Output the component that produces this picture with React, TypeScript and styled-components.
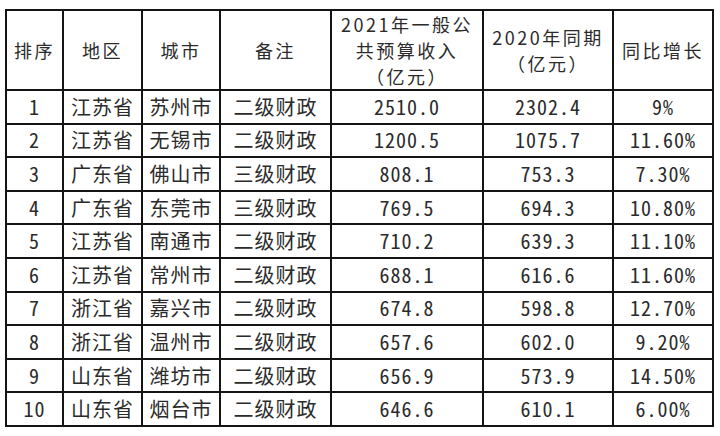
import React from "react";
import styled, { createGlobalStyle } from "styled-components";

const GlobalStyle = createGlobalStyle`
  html, body {
    margin: 0;
    padding: 0;
    background: #ffffff;
  }
`;

const Page = styled.div`
  padding: 9px 0 0 5px;
`;

const Table = styled.table`
  border-collapse: collapse;
  table-layout: fixed;
  width: 709px;
  border: 2px solid #141414;
  color: #2b2b2b;
  font-family: "Noto Sans CJK SC", "Noto Sans", sans-serif;
  font-size: 20px;
`;

const HeadCell = styled.th`
  border: 2px solid #141414;
  height: 77px;
  padding: 0;
  font-size: 18px;
  font-weight: 400;
  letter-spacing: 2.5px;
  line-height: 26px;
  text-align: center;
  vertical-align: middle;
  white-space: nowrap;
`;

const Row = styled.tr`
  height: 33.6px;
`;

const Cell = styled.td<{ $mono?: boolean }>`
  border: 2px solid #141414;
  padding: 0;
  text-align: center;
  vertical-align: middle;
  line-height: 28px;
  font-family: ${(p) =>
    p.$mono
      ? `"Noto Sans Mono CJK SC", "Liberation Mono", monospace`
      : `"Noto Sans CJK SC", "Noto Sans", sans-serif`};
  letter-spacing: 1px;
`;

const widths = [57, 79, 78, 111, 152, 130, 100];

type Item = {
  rank: number;
  region: string;
  city: string;
  note: string;
  income: string;
  last: string;
  growth: string;
};

const rows: Item[] = [
  { rank: 1, region: "江苏省", city: "苏州市", note: "二级财政", income: "2510.0", last: "2302.4", growth: "9%" },
  { rank: 2, region: "江苏省", city: "无锡市", note: "二级财政", income: "1200.5", last: "1075.7", growth: "11.60%" },
  { rank: 3, region: "广东省", city: "佛山市", note: "三级财政", income: "808.1", last: "753.3", growth: "7.30%" },
  { rank: 4, region: "广东省", city: "东莞市", note: "三级财政", income: "769.5", last: "694.3", growth: "10.80%" },
  { rank: 5, region: "江苏省", city: "南通市", note: "二级财政", income: "710.2", last: "639.3", growth: "11.10%" },
  { rank: 6, region: "江苏省", city: "常州市", note: "二级财政", income: "688.1", last: "616.6", growth: "11.60%" },
  { rank: 7, region: "浙江省", city: "嘉兴市", note: "二级财政", income: "674.8", last: "598.8", growth: "12.70%" },
  { rank: 8, region: "浙江省", city: "温州市", note: "二级财政", income: "657.6", last: "602.0", growth: "9.20%" },
  { rank: 9, region: "山东省", city: "潍坊市", note: "二级财政", income: "656.9", last: "573.9", growth: "14.50%" },
  { rank: 10, region: "山东省", city: "烟台市", note: "二级财政", income: "646.6", last: "610.1", growth: "6.00%" },
];

export default function App() {
  return (
    <Page>
      <GlobalStyle />
      <Table>
        <colgroup>
          {widths.map((w, i) => (
            <col key={i} style={{ width: w }} />
          ))}
        </colgroup>
        <thead>
          <tr>
            <HeadCell>排序</HeadCell>
            <HeadCell>地区</HeadCell>
            <HeadCell>城市</HeadCell>
            <HeadCell>备注</HeadCell>
            <HeadCell>
              2021年一般公
              <br />
              共预算收入
              <br />
              （亿元）
            </HeadCell>
            <HeadCell>
              2020年同期
              <br />
              （亿元）
            </HeadCell>
            <HeadCell>同比增长</HeadCell>
          </tr>
        </thead>
        <tbody>
          {rows.map((r) => (
            <Row key={r.rank}>
              <Cell $mono>{r.rank}</Cell>
              <Cell>{r.region}</Cell>
              <Cell>{r.city}</Cell>
              <Cell>{r.note}</Cell>
              <Cell $mono>{r.income}</Cell>
              <Cell $mono>{r.last}</Cell>
              <Cell $mono>{r.growth}</Cell>
            </Row>
          ))}
        </tbody>
      </Table>
    </Page>
  );
}
